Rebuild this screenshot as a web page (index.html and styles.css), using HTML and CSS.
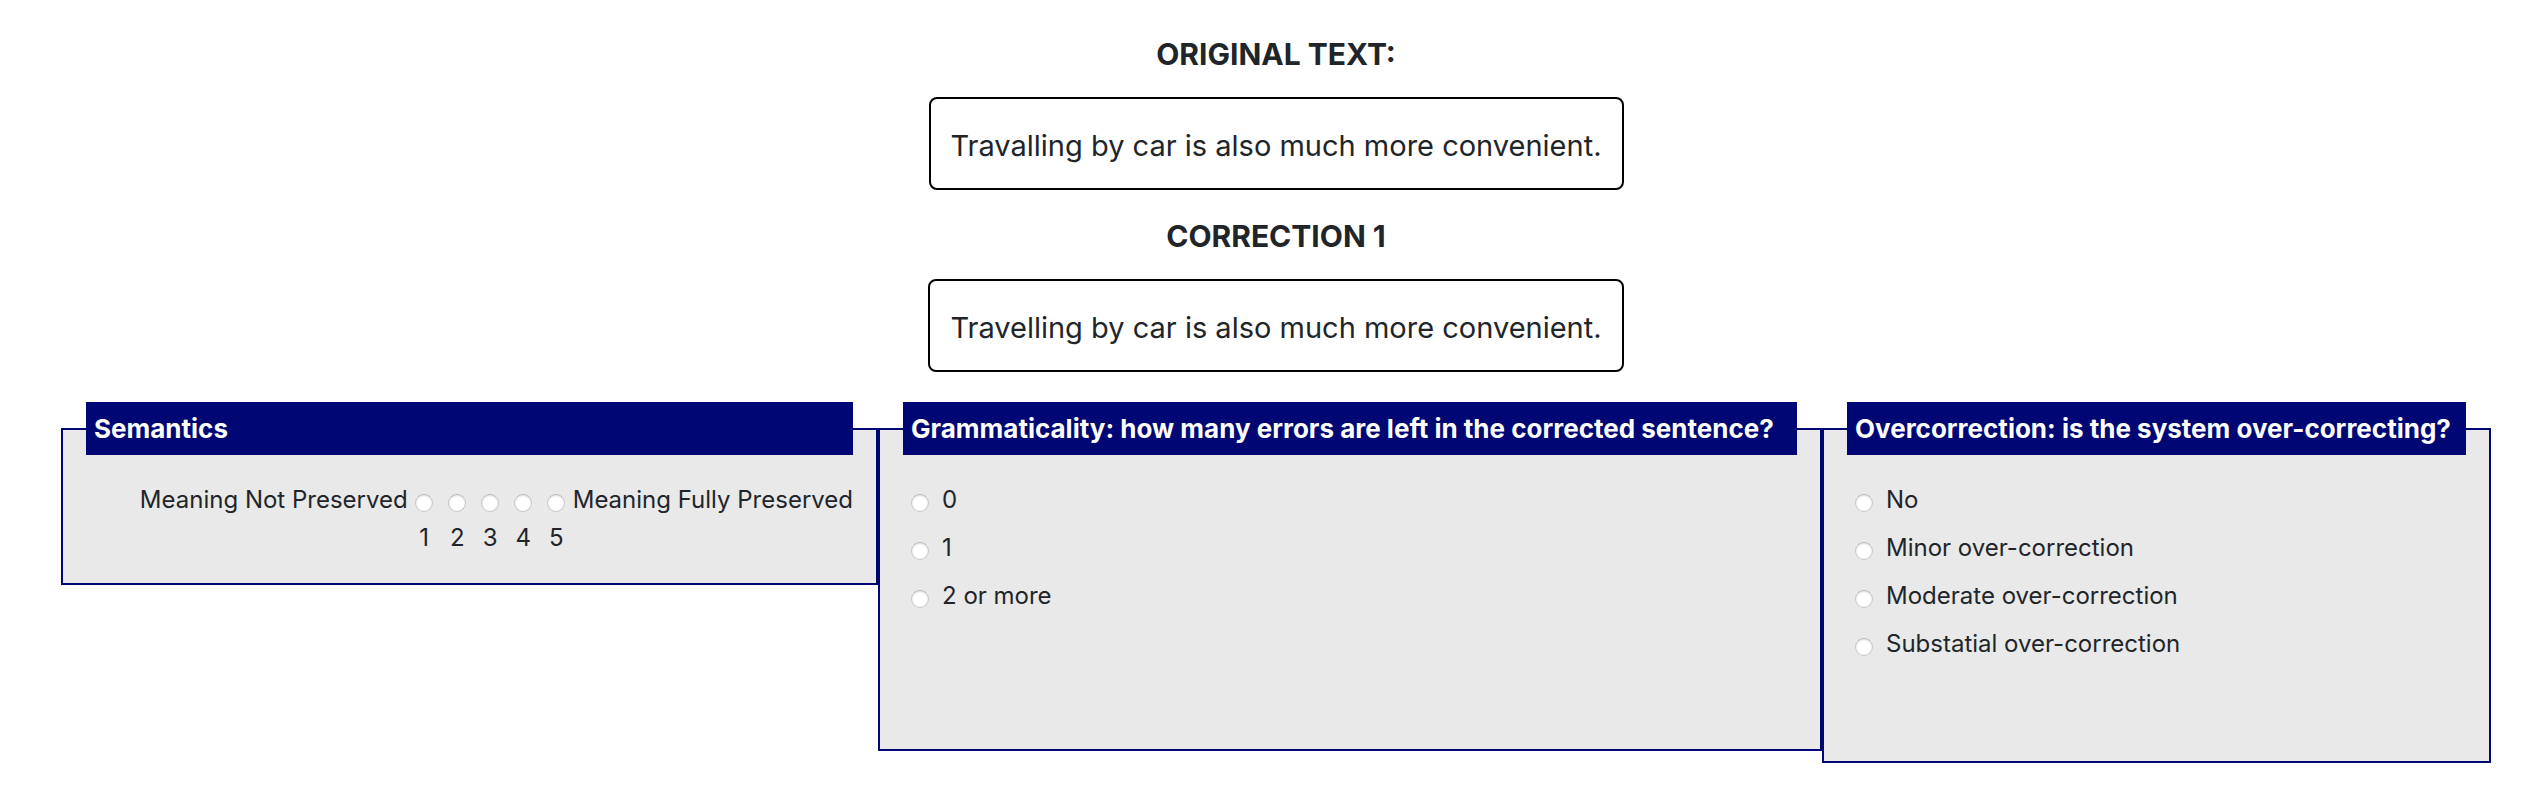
FILE: index.html
```html
<!DOCTYPE html>
<html lang="en">
<head>
<meta charset="utf-8">
<meta name="viewport" content="width=device-width, initial-scale=1">
<title>Correction rating</title>
<link rel="stylesheet" href="styles.css">
</head>
<body>
<main class="page">
  <section class="sample">
    <h2 class="sample-title">ORIGINAL TEXT:</h2>
    <p class="sample-text">Travalling by car is also much more convenient.</p>
  </section>
  <section class="sample">
    <h2 class="sample-title">CORRECTION 1</h2>
    <p class="sample-text">Travelling by car is also much more convenient.</p>
  </section>
  <form class="questions">
    <fieldset class="question question-semantics">
      <legend class="question-title">Semantics</legend>
      <div class="scale">
        <span>Meaning Not Preserved</span>
        <div class="scale-points">
          <label class="point"><input class="radio" type="radio" name="semantics" value="1">1</label>
          <label class="point"><input class="radio" type="radio" name="semantics" value="2">2</label>
          <label class="point"><input class="radio" type="radio" name="semantics" value="3">3</label>
          <label class="point"><input class="radio" type="radio" name="semantics" value="4">4</label>
          <label class="point"><input class="radio" type="radio" name="semantics" value="5">5</label>
        </div>
        <span>Meaning Fully Preserved</span>
      </div>
    </fieldset>
    <fieldset class="question question-grammar">
      <legend class="question-title">Grammaticality: how many errors are left in the corrected sentence?</legend>
      <div class="options">
        <label class="option"><input class="radio" type="radio" name="grammar" value="0">0</label>
        <label class="option"><input class="radio" type="radio" name="grammar" value="1">1</label>
        <label class="option"><input class="radio" type="radio" name="grammar" value="2">2 or more</label>
      </div>
    </fieldset>
    <fieldset class="question question-over">
      <legend class="question-title">Overcorrection: is the system over-correcting?</legend>
      <div class="options">
        <label class="option"><input class="radio" type="radio" name="over" value="no">No</label>
        <label class="option"><input class="radio" type="radio" name="over" value="minor">Minor over-correction</label>
        <label class="option"><input class="radio" type="radio" name="over" value="moderate">Moderate over-correction</label>
        <label class="option"><input class="radio" type="radio" name="over" value="substantial">Substatial over-correction</label>
      </div>
    </fieldset>
  </form>
</main>
</body>
</html>
```
FILE: styles.css
```css
* {
  box-sizing: border-box;
}

body {
  margin: 0;
  background: #fff;
  color: #212529;
  font-family: Inter, "Liberation Sans", sans-serif;
  font-size: 24px;
  line-height: 36px;
}

.page {
  padding: 36px 51px 36px 61px;
}

.sample {
  display: flex;
  flex-direction: column;
  align-items: center;
  gap: 25px;
  margin-bottom: 28px;
}

.sample-title,
.sample-text {
  margin: 0;
}

.sample-title {
  font-size: 30px;
  font-weight: 700;
}

.sample-text {
  padding: 29px 20px 24px;
  border: 2px solid #000;
  border-radius: 8px;
  font-size: 29px;
}

.questions {
  display: flex;
  align-items: flex-start;
  margin-top: 30px;
}

.question {
  min-width: 0;
  margin: 0;
  padding: 0 23px;
  border: 2px solid #000775;
  background: #e9e9e9;
}

/* Column shares are net of each fieldset's own padding and border. */
.question-semantics {
  flex: 767 1 0;
  padding-bottom: 27px;
}

.question-grammar {
  flex: 894 1 0;
  padding-bottom: 123px;
}

.question-over {
  flex: 619 1 0;
  padding-bottom: 87px;
}

.question-title {
  width: 100%;
  margin-bottom: 27px;
  padding: 9px 8px 8px;
  background: #000775;
  color: #fff;
  font-size: 26px;
  font-weight: 700;
}

.scale {
  display: flex;
  justify-content: flex-end;
}

.scale-points {
  display: flex;
}

.point {
  display: flex;
  flex-direction: column;
  align-items: center;
  gap: 8px;
  width: 33px;
}

.options {
  padding-left: 8px;
}

.option {
  display: flex;
  align-items: flex-start;
  gap: 13px;
  margin-bottom: 12px;
}

.radio {
  flex: none;
  appearance: none;
  width: 18px;
  height: 18px;
  margin: 12px 0 0;
  border: 1px solid #c6c6c6;
  border-top-color: #b4b4b4;
  border-radius: 50%;
  background: #fff;
  box-shadow: inset 0 1px 2px #e0e0e0;
}

.radio:checked {
  border: 5px solid #0a6cff;
}
```
